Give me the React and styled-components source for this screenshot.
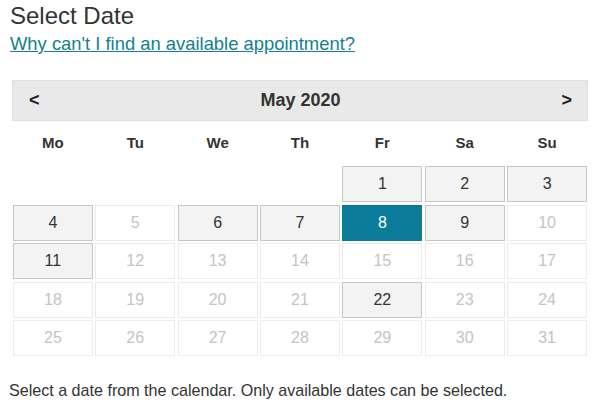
import React from 'react';
import styled, { createGlobalStyle } from 'styled-components';

const GlobalStyle = createGlobalStyle`
  body {
    margin: 0;
    background: #fff;
    font-family: "Liberation Sans", Arial, sans-serif;
    color: #333;
  }
`;

const Page = styled.div`
  padding: 2px 10px 0 10px;
`;

const Title = styled.h2`
  margin: 0;
  font-size: 24px;
  font-weight: normal;
  line-height: 28px;
  color: #333;
`;

const HelpLink = styled.a`
  display: inline-block;
  margin-top: 3px;
  font-size: 18.4px;
  line-height: 22px;
  color: #137f8f;
  text-decoration: underline;
  cursor: pointer;
`;

const Calendar = styled.div`
  margin: 25px 0 0 2px;
  width: 576px;
`;

const MonthBar = styled.div`
  display: flex;
  align-items: center;
  justify-content: space-between;
  height: 41px;
  padding: 0 15px 0 16px;
  box-sizing: border-box;
  background: #e9e9e9;
  border: 1px solid #e0e0e0;
`;

const NavButton = styled.span`
  font-size: 18px;
  font-weight: bold;
  color: #222;
  cursor: pointer;
`;

const MonthLabel = styled.span`
  font-size: 18px;
  font-weight: bold;
  color: #333;
`;

const Grid = styled.div`
  display: grid;
  grid-template-columns: repeat(7, 1fr);
  column-gap: 2.6px;
  row-gap: 2.4px;
  padding: 0 1px;
`;

const DayName = styled.div`
  height: 43px;
  display: flex;
  align-items: center;
  justify-content: center;
  font-size: 15px;
  font-weight: bold;
  color: #333;
`;

const Cell = styled.div`
  height: 36px;
  box-sizing: border-box;
  display: flex;
  align-items: center;
  justify-content: center;
  font-size: 16px;
  border: 1px solid
    ${(p) => (p.$state === 'selected' ? '#0a7c9a' : p.$state === 'open' ? '#c6c6c6' : '#ececec')};
  background: ${(p) => (p.$state === 'selected' ? '#0a7c9a' : p.$state === 'open' ? '#f3f3f3' : '#fff')};
  color: ${(p) => (p.$state === 'selected' ? '#fff' : p.$state === 'open' ? '#333' : '#c4c4c4')};
  cursor: ${(p) => (p.$state === 'off' ? 'default' : 'pointer')};
`;

const Spacer = styled.div`
  height: 36px;
`;

const Note = styled.p`
  margin: 24px 0 0 -1px;
  font-size: 16.1px;
  line-height: 20px;
  color: #333;
`;

const dayNames = ['Mo', 'Tu', 'We', 'Th', 'Fr', 'Sa', 'Su'];
const available = [1, 2, 3, 4, 6, 7, 9, 11, 22];
const selected = 8;
const offset = 4; // May 1st 2020 is a Friday

const App = () => {
  const cells = [];
  for (let i = 0; i < offset; i++) cells.push(<Spacer key={'s' + i} />);
  for (let d = 1; d <= 31; d++) {
    const state = d === selected ? 'selected' : available.includes(d) ? 'open' : 'off';
    cells.push(
      <Cell key={d} $state={state}>
        {d}
      </Cell>
    );
  }

  return (
    <Page>
      <GlobalStyle />
      <Title>Select Date</Title>
      <HelpLink>Why can't I find an available appointment?</HelpLink>
      <Calendar>
        <MonthBar>
          <NavButton>&lt;</NavButton>
          <MonthLabel>May 2020</MonthLabel>
          <NavButton>&gt;</NavButton>
        </MonthBar>
        <Grid>
          {dayNames.map((n) => (
            <DayName key={n}>{n}</DayName>
          ))}
          {cells}
        </Grid>
      </Calendar>
      <Note>Select a date from the calendar. Only available dates can be selected.</Note>
    </Page>
  );
};

export default App;
